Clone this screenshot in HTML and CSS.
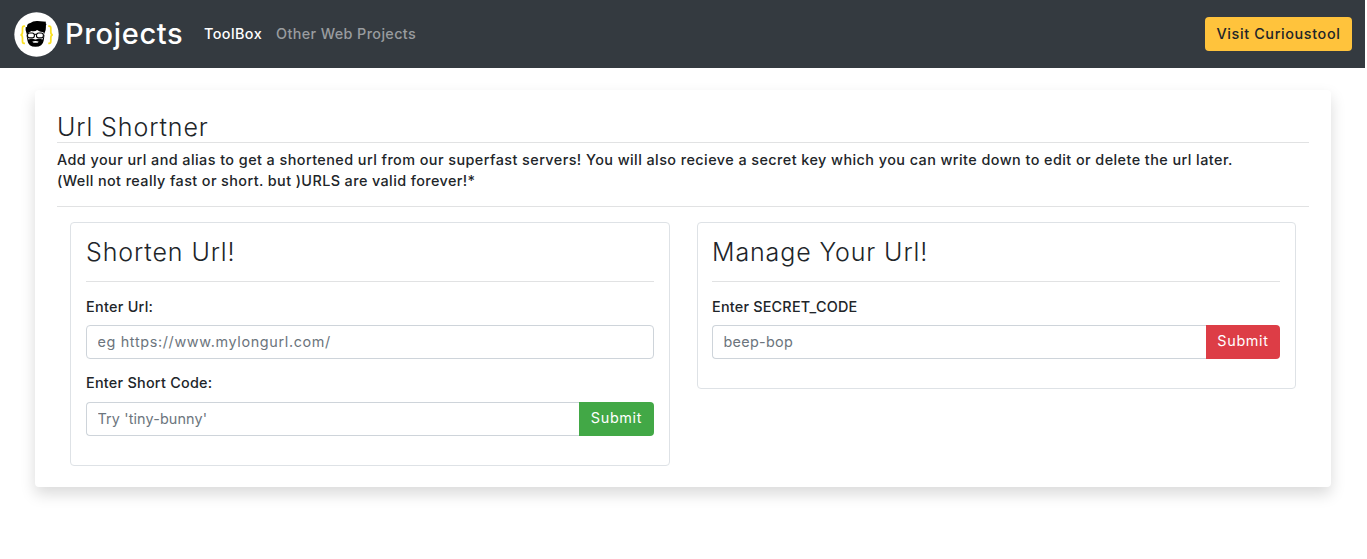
FILE: index.html
```html
<!DOCTYPE html>
<html lang="en">
<head>
<meta charset="utf-8">
<title>Url Shortner</title>
<link rel="stylesheet" href="styles.css">
</head>
<body>
<nav class="navbar">
  <a class="brand">
    <svg class="logo" viewBox="0 0 44 44" aria-hidden="true">
      <circle cx="22" cy="22" r="21.700" fill="#fff"/>
      <g fill="none" stroke="#fbe122" stroke-width="1.700">
        <path d="M10.700 13.800H9.800Q8.300 13.800 8.300 15.800V19.500Q8.300 22.300 6.300 22.300Q8.300 22.300 8.300 25.300V28.700Q8.300 30.700 9.800 30.700H10.700"/>
        <path d="M33.500 13.800H34.400Q36 13.800 36 15.800V19.500Q36 22.300 38 22.300Q36 22.300 36 25.300V28.700Q36 30.700 34.400 30.700H33.500"/>
      </g>
      <path d="M12.600 22Q10.600 18 11.500 14.500L12.700 14.800Q12.500 11 16 10.700Q18.500 8.600 23 8.800L31.300 9.500Q30.400 10.500 31.700 12Q31 13 31.200 15Q31.500 18 29.500 21.500L28.500 19.500Q26 20 22.500 17.500Q21 19.500 17 18.600L14.500 20Z"/>
      <path d="M12 21.500L13.200 28Q14 34 21 34Q28 34 29 28L30 21.500L27.800 26.800Q24.500 25.500 21 27Q17.500 25.500 14.200 26.800Z"/>
      <path d="M17.800 29Q21 27.700 24.200 29L23 30H19.200Z" fill="#fff"/>
      <g fill="#fff" stroke="#000" stroke-width="1.100"><rect x="13.200" y="20.500" width="6.700" height="4.800" rx="2.100"/><rect x="22" y="20.500" width="6.700" height="4.800" rx="2.100"/><path d="M19.900 22Q21 21.500 22 22"/></g>
    </svg>
    <span class="brand-name">Projects</span>
  </a>
  <a class="nav-link active">ToolBox</a>
  <a class="nav-link others">Other Web Projects</a>
  <a class="visit">Visit Curioustool</a>
</nav>
<main class="card">
  <h1 class="title">Url Shortner</h1>
  <p class="intro"><span class="intro-first">Add your url and alias to get a shortened url from our superfast servers! You will also recieve a secret key which you can write down to edit or delete the url later.</span><br><span class="intro-second">(Well not really fast or short. but )URLS are valid forever!*</span></p>
  <div class="columns">
    <section class="panel">
      <h2 class="panel-title shorten">Shorten Url!</h2>
      <label class="label">Enter Url:</label>
      <div class="group"><input class="input url" placeholder="eg https://www.mylongurl.com/"></div>
      <label class="label code">Enter Short Code:</label>
      <div class="group"><input class="input joined" placeholder="Try 'tiny-bunny'"><button class="submit green">Submit</button></div>
    </section>
    <section class="panel right">
      <h2 class="panel-title manage">Manage Your Url!</h2>
      <label class="label secret">Enter SECRET_CODE</label>
      <div class="group"><input class="input joined beep" placeholder="beep-bop"><button class="submit red">Submit</button></div>
    </section>
  </div>
</main>
</body>
</html>
```
FILE: styles.css
```css
* { box-sizing: border-box; }
body { margin: 0; min-height: 559px; background: #fff; color: #212529; font: 550 14.4px/21.6px Inter, sans-serif; }
.navbar { display: flex; align-items: center; height: 68px; padding: 0 13px 0 14px; margin-right: 2px; background: #343a40; color: #fff; white-space: nowrap; }
.brand { display: flex; align-items: center; width: 190px; gap: 6px; }
.logo { width: 45px; height: 45px; flex: none; }
.brand-name { font-size: 29px; line-height: 44px; letter-spacing: .65px; }
.nav-link { width: 72px; letter-spacing: .42px; }
.others { width: auto; color: #999c9f; letter-spacing: .37px; }
.visit { margin-left: auto; width: 147px; height: 34px; line-height: 34px; border-radius: 4px; background: #ffc33c; color: #212529; text-align: center; letter-spacing: .62px; }
.card { width: 1296px; height: 397px; margin: 22px 0 0 35px; padding: 22px; border-radius: 4px; background: #fff; box-shadow: 0 7px 15px rgba(0,0,0,.15); }
.title { height: 31px; margin: 0; border-bottom: 1px solid #e1e2e3; font-size: 25px; font-weight: 340; line-height: 30px; letter-spacing: .9px; }
.intro { height: 64px; margin: 0; padding-top: 6px; border-bottom: 1px solid #e1e2e3; white-space: nowrap; line-height: 21px; }
.intro-first { letter-spacing: .437px; }
.intro-second { letter-spacing: .4px; }
.columns { display: grid; grid-template-columns: 600px 599px; gap: 27px; align-items: start; padding: 15px 13px 0; }
.panel { padding: 14px 15px 29px; border: 1px solid #dee2e6; border-radius: 4px; }
.right { padding-left: 14px; }
.panel-title { height: 45px; margin: 0 0 14px; border-bottom: 1px solid #e1e2e3; font-size: 25px; font-weight: 340; line-height: 31px; }
.shorten { letter-spacing: .9px; }
.manage { letter-spacing: .88px; }
.label { display: block; height: 29px; line-height: 21px; letter-spacing: .28px; }
.code { margin-top: 14px; line-height: 20px; letter-spacing: .25px; }
.secret { letter-spacing: .21px; }
.group { display: flex; height: 34px; }
.input { flex: 1; min-width: 0; padding: 0 10px 2px 10.5px; border: 1px solid #ced4da; border-radius: 4px; font: 400 14.4px Inter, sans-serif; letter-spacing: .12px; background: #fff; }
.input::placeholder { color: #6c757d; }
.url { letter-spacing: .65px; }
.beep { letter-spacing: .28px; }
.joined { border-right: 0; border-radius: 4px 0 0 4px; }
.submit { width: 75px; padding: 0 0 3px; border: 0; border-radius: 0 4px 4px 0; color: #fff; font: 400 14.4px Inter, sans-serif; letter-spacing: .65px; }
.green { background: #42a846; }
.red { width: 74px; background: #dd3d46; }
```
